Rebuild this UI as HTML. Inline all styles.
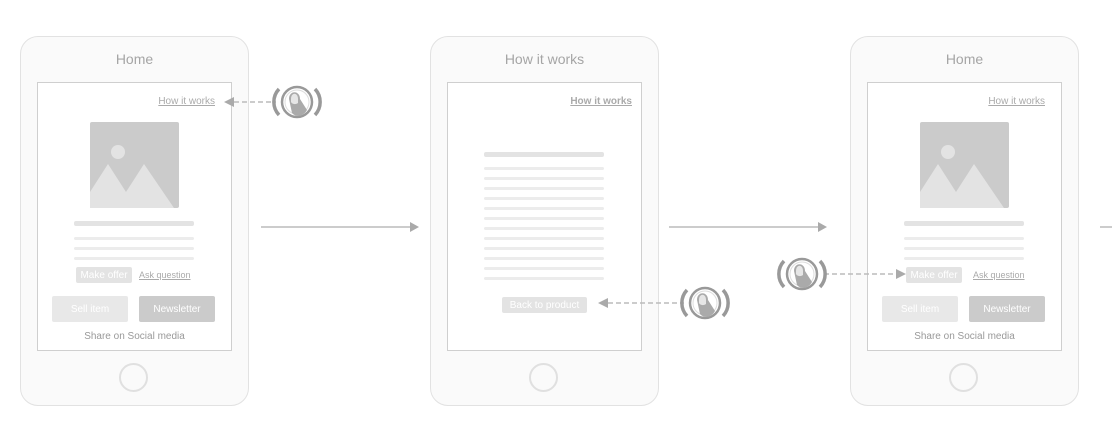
<!DOCTYPE html><html><head><style>
*{box-sizing:border-box}
body{margin:0;width:1112px;height:439px;background:#fff;position:relative;overflow:hidden;font-family:"Liberation Sans",sans-serif}
.a{position:absolute}
.ph{position:absolute;top:36px;width:229px;height:370px;border:1px solid #e2e2e2;border-radius:18px;background:#fafafa}
.t{position:absolute;top:14px;left:0;width:100%;text-align:center;color:#a5a5a5;font-size:14px}
.sc{position:absolute;left:16px;top:45px;width:195px;height:269px;border:1px solid #cfcfcf;background:#fff}
.hb{position:absolute;left:98px;top:326px;width:29px;height:29px;border:2px solid #e0e0e0;border-radius:50%}
.lk{position:absolute;font-size:10px;color:#aaa;text-decoration:underline}
.ln{position:absolute;background:#ececec;height:3px;border-radius:2px}
.bt{position:absolute;color:#fff;font-size:10px;text-align:center;border-radius:2px}
</style></head><body>
<div class="ph" style="left:20px"><div class="t">Home</div><div class="sc">
<div class="lk" style="right:16px;top:13px">How it works</div>
<svg class="a" style="left:52px;top:39px" width="89" height="86"><rect width="89" height="86" rx="2" fill="#cbcbcb"/><circle cx="28" cy="30" r="7" fill="#e3e3e3"/><path d="M0 86 L0 70 L18 42 L36 70 L54 42 L84 86Z" fill="#e3e3e3"/></svg>
<div class="ln" style="left:36px;top:138px;width:120px;height:5px;background:#e3e3e3"></div>
<div class="ln" style="left:36px;top:154px;width:120px"></div>
<div class="ln" style="left:36px;top:164px;width:120px"></div>
<div class="ln" style="left:36px;top:174px;width:120px"></div>
<div class="bt" style="left:38px;top:184px;width:56px;height:16px;line-height:17px;background:#e3e3e3">Make offer</div>
<div class="lk" style="left:101px;top:187px;font-size:9px">Ask question</div>
<div class="bt" style="left:14px;top:213px;width:76px;height:26px;line-height:28px;background:#e8e8e8">Sell item</div>
<div class="bt" style="left:101px;top:213px;width:76px;height:26px;line-height:28px;background:#cbcbcb">Newsletter</div>
<div class="a" style="left:0;top:248px;width:100%;text-align:center;font-size:10px;color:#999">Share on Social media</div>
</div><div class="hb"></div></div>
<div class="ph" style="left:430px"><div class="t">How it works</div><div class="sc">
<div class="lk" style="right:9px;top:13px;font-weight:bold;color:#aaa">How it works</div>
<div class="ln" style="left:36px;top:69px;width:120px;height:5px;background:#e3e3e3"></div>
<div class="ln" style="left:36px;top:84px;width:120px"></div><div class="ln" style="left:36px;top:94px;width:120px"></div><div class="ln" style="left:36px;top:104px;width:120px"></div><div class="ln" style="left:36px;top:114px;width:120px"></div><div class="ln" style="left:36px;top:124px;width:120px"></div><div class="ln" style="left:36px;top:134px;width:120px"></div><div class="ln" style="left:36px;top:144px;width:120px"></div><div class="ln" style="left:36px;top:154px;width:120px"></div><div class="ln" style="left:36px;top:164px;width:120px"></div><div class="ln" style="left:36px;top:174px;width:120px"></div><div class="ln" style="left:36px;top:184px;width:120px"></div><div class="ln" style="left:36px;top:194px;width:120px"></div>
<div class="bt" style="left:54px;top:214px;width:85px;height:16px;line-height:17px;background:#e3e3e3">Back to product</div>
</div><div class="hb"></div></div>
<div class="ph" style="left:850px"><div class="t">Home</div><div class="sc">
<div class="lk" style="right:16px;top:13px">How it works</div>
<svg class="a" style="left:52px;top:39px" width="89" height="86"><rect width="89" height="86" rx="2" fill="#cbcbcb"/><circle cx="28" cy="30" r="7" fill="#e3e3e3"/><path d="M0 86 L0 70 L18 42 L36 70 L54 42 L84 86Z" fill="#e3e3e3"/></svg>
<div class="ln" style="left:36px;top:138px;width:120px;height:5px;background:#e3e3e3"></div>
<div class="ln" style="left:36px;top:154px;width:120px"></div>
<div class="ln" style="left:36px;top:164px;width:120px"></div>
<div class="ln" style="left:36px;top:174px;width:120px"></div>
<div class="bt" style="left:38px;top:184px;width:56px;height:16px;line-height:17px;background:#e3e3e3">Make offer</div>
<div class="lk" style="left:105px;top:187px;font-size:9px">Ask question</div>
<div class="bt" style="left:14px;top:213px;width:76px;height:26px;line-height:28px;background:#e8e8e8">Sell item</div>
<div class="bt" style="left:101px;top:213px;width:76px;height:26px;line-height:28px;background:#cbcbcb">Newsletter</div>
<div class="a" style="left:0;top:248px;width:100%;text-align:center;font-size:10px;color:#999">Share on Social media</div>
</div><div class="hb"></div></div>
<svg class="a" style="left:0;top:0" width="1112" height="439">
<defs><g id="tap"><path d="M-18 -13 A19 19 0 0 0 -18 13" fill="none" stroke="#999" stroke-width="3.5"/><path d="M18 -13 A19 19 0 0 1 18 13" fill="none" stroke="#999" stroke-width="3.5"/><circle r="15" fill="#fff" stroke="#999" stroke-width="2.5"/><circle r="12" fill="none" stroke="#ddd" stroke-width="1"/><path d="M-8 -3 C-8 -12 3 -12 3 -3 L10 8 C7 14 -1 16 -5 11Z" fill="#aaa"/><path d="M-6 -3 C-6 -10 1 -10 1 -3 L1 1 C-2 3 -5 2 -6 0Z" fill="#e6e6e6"/></g></defs>
<g stroke="#bbb" stroke-width="1.5"><line x1="261" y1="227" x2="410" y2="227"/><line x1="669" y1="227" x2="818" y2="227"/><line x1="1100" y1="227" x2="1112" y2="227"/></g>
<path d="M410 222 L419 227 L410 232Z M818 222 L827 227 L818 232Z" fill="#aaa"/>
<g stroke="#bbb" stroke-width="1.5" stroke-dasharray="5 3"><line x1="234" y1="102" x2="276" y2="102"/><line x1="608" y1="303" x2="684" y2="303"/><line x1="824" y1="274" x2="897" y2="274"/></g>
<path d="M224 102 L234 97 L234 107Z M598 303 L608 298 L608 308Z M906 274 L896 269 L896 279Z" fill="#aaa"/>
<use href="#tap" x="297" y="102"/><use href="#tap" x="705" y="303"/><use href="#tap" x="802" y="274"/>
</svg>
</body></html>
